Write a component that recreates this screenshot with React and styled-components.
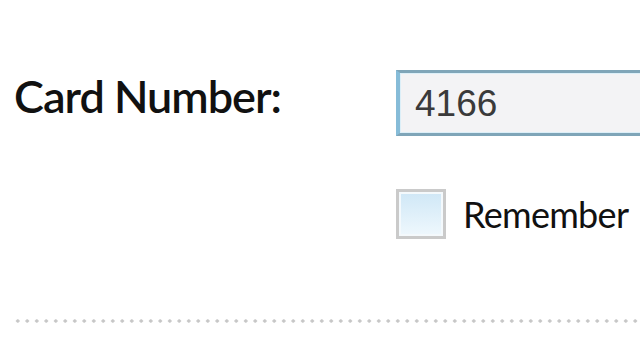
import React from 'react';
import styled, { createGlobalStyle } from 'styled-components';

const GlobalStyle = createGlobalStyle`
  html, body {
    margin: 0;
    padding: 0;
    background: #ffffff;
    overflow: hidden;
  }
`;

const Page = styled.div`
  width: 640px;
  height: 360px;
  overflow: hidden;
  background: #fff;
  padding: 70px 0 0 14px;
  box-sizing: border-box;
  font-family: Lato, 'Open Sans', sans-serif;
`;

const FormGrid = styled.div`
  display: grid;
  grid-template-columns: 382px 420px;
  row-gap: 53px;
`;

const Label = styled.label`
  font-size: 45px;
  font-weight: 600;
  color: #111;
  line-height: 52px;
  letter-spacing: -1px;
  white-space: nowrap;
`;

const TextInput = styled.input`
  box-sizing: border-box;
  width: 420px;
  height: 66px;
  margin: 0;
  padding: 2px 0 0 15px;
  font-family: 'Liberation Sans', Arial, sans-serif;
  font-size: 37px;
  color: #3a3a3a;
  background: #f3f3f5;
  border: 3px solid #7fa5b8;
  border-left: 4px solid #86bcd8;
  box-shadow: inset 0 0 0 1px #dceff8;
  outline: none;
`;

const CheckRow = styled.div`
  grid-column: 2;
  display: flex;
  align-items: center;
  gap: 17px;
  height: 50px;
`;

const CheckBox = styled.span`
  flex: none;
  box-sizing: border-box;
  width: 50px;
  height: 50px;
  border: 3px solid #cacaca;
  box-shadow: inset 0 0 0 2px #f4f9fc;
  background: linear-gradient(to bottom, #cfe7f6, #eff8fd);
`;

const CheckText = styled.span`
  font-size: 36px;
  color: #111;
  line-height: 50px;
  letter-spacing: -0.7px;
  white-space: nowrap;
`;

const Divider = styled.div`
  margin-top: 80px;
  margin-left: -1px;
  height: 4px;
  width: 640px;
  background-image: radial-gradient(circle, #c6c6c6 1.4px, transparent 2px);
  background-size: 9.5px 4px;
  background-repeat: repeat-x;
`;

export default function App() {
  return (
    <Page>
      <GlobalStyle />
      <FormGrid>
        <Label htmlFor="card">Card Number:</Label>
        <TextInput id="card" defaultValue="4166" />
        <CheckRow>
          <CheckBox />
          <CheckText>Remember</CheckText>
        </CheckRow>
      </FormGrid>
      <Divider />
    </Page>
  );
}
